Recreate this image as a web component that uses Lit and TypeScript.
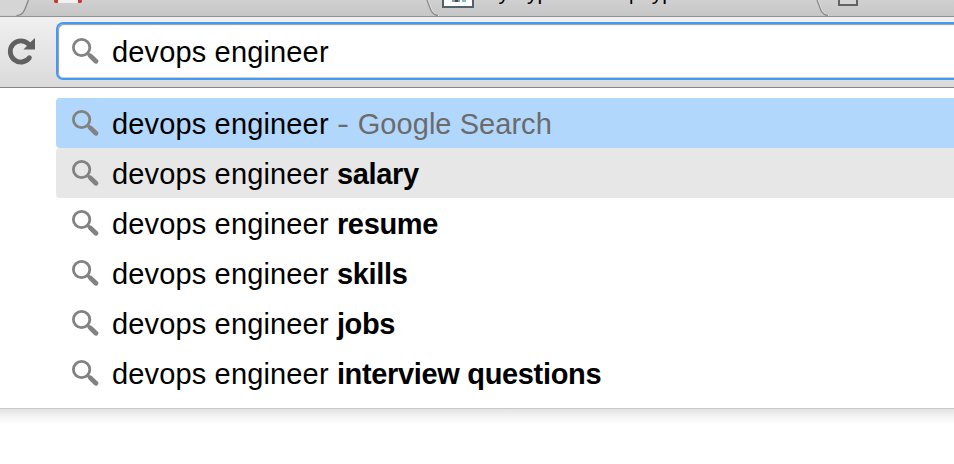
import { LitElement, html, css } from "lit";
import { customElement } from "lit/decorators.js";

const suggestions = [
  { tail: "Google Search", kind: "search" },
  { tail: "salary", kind: "hover" },
  { tail: "resume", kind: "" },
  { tail: "skills", kind: "" },
  { tail: "jobs", kind: "" },
  { tail: "interview questions", kind: "" },
];

const magnifier = html`<svg class="glass" width="28" height="28" viewBox="0 0 28 28">
  <circle cx="10.6" cy="10.5" r="8.2" fill="none" stroke="#828282" stroke-width="2.8" />
  <path d="M16.4 16.2L19 18.8" stroke="#828282" stroke-width="3.2" />
  <path d="M19.6 19.1L24.9 24.3" stroke="#828282" stroke-width="4.8" stroke-linecap="round" />
</svg>`;

const divider = html`<svg class="divider" width="15" height="16" viewBox="2 0 15 16">
  <path d="M3 0C6 7 7 15.5 14 15.5" fill="none" stroke="#e2e2e2" stroke-width="1.2" />
  <path d="M2 0C5 7 6 15.5 13 15.5" fill="none" stroke="#8b8b8b" stroke-width="1.3" />
</svg>`;

@customElement("app-root")
export class AppRoot extends LitElement {
  static styles = css`
    :host { display: block; width: 954px; height: 464px; overflow: hidden; background: #fff;
      font-family: "Liberation Sans", Arial, sans-serif; font-size: 29px; letter-spacing: 0.15px; color: #000; }
    * { box-sizing: border-box; }
    svg { display: block; flex: none; }
    .divider { overflow: visible; }
    .tabs { height: 17px; display: flex; align-items: flex-start; overflow: hidden; border-bottom: 1px solid #929292;
      background: linear-gradient(#d0d0d0, #c6c6c6); }
    .tab { display: flex; align-items: flex-start; flex: none; overflow: hidden; height: 16px; }
    .first { width: 397px; padding-left: 22px; }
    .second { width: 375px; }
    .third { padding-left: 6px; }
    .title { font-size: 21px; line-height: 24px; letter-spacing: 0.1px; margin-top: -19px; white-space: pre; }
    .first .title { color: #777; margin: -19px 0 0 14px; }
    .second .title { margin-left: 7px; }
    .third .title { color: #888; margin: -20px 0 0 16px; }
    .toolbar { height: 71px; display: flex; padding: 5px 0 0 6px; background: linear-gradient(#f0f0f0, #dadada);
      border-bottom: 1px solid #858585; }
    .reload { margin: 15px 20px 0 0; }
    .box { flex: 1; height: 58px; border: 2px solid #439af5; border-right: 0; border-radius: 7px 0 0 7px;
      background: #fff; box-shadow: inset 1px 1px 1px #999, inset 0 -1px 0 #ccc; display: flex; align-items: center;
      padding-left: 13px; }
    .glass { margin-right: 13px; }
    .text { padding-top: 2px; }
    .menu { height: 321px; padding: 10px 0 0 56px; border-bottom: 1px solid #c9c9c9; }
    .row { height: 50px; display: flex; align-items: center; padding-left: 15px; white-space: pre;
      border-radius: 4px 0 0 4px; }
    .search { background: #b2d7fd; }
    .hover { background: #e7e7e7; }
    .desc { color: #6b6b6b; letter-spacing: 0.05px; }
    .dash { display: inline-block; transform: scaleX(1.25); transform-origin: 0 50%; margin-right: 3px; }
    b { letter-spacing: -0.34px; }
    .shade { height: 16px; background: linear-gradient(#e2e2e2, #f5f5f5 50%, #fff); }
  `;

  render() {
    return html`
      <div class="tabs">
        <svg width="30" height="16" viewBox="0 0 30 16">
          <path d="M0 0H28C25 7 24 15.5 16 15.5H0Z" fill="#d5d5d5" />
          <path d="M28.5 0C25.5 7 24.5 15.5 16.5 15.5" fill="none" stroke="#8b8b8b" stroke-width="1.4" />
        </svg>
        <div class="tab first">
          <svg width="30" height="4" viewBox="0 0 30 4">
            <path d="M2 0H30V3H2Z" fill="#f1f1f1" />
            <path d="M2 0H6V3H3.5Q2 3 2 1.5ZM26 0H30V1.5Q30 3 28.5 3H26Z" fill="#c93c31" />
          </svg>
          <span class="title">Inbox - Research Mail</span>
        </div>
        ${divider}
        <div class="tab second">
          <svg width="32" height="8" viewBox="0 0 32 8">
            <path d="M1 -3H31V7H1Z" fill="#fff" />
            <path d="M0 0H2V6H30V0H32V8H0Z" fill="#53616e" />
            <path d="M10 0H13V2H10ZM16 0H18V2H16Z" fill="#8e949d" />
            <path d="M13 0H16V2H13Z" fill="#454b5e" />
            <path d="M20 0H24V2H20Z" fill="#70c4c1" />
          </svg>
          <span class="title">My hypothes.is | hypothes.is</span>
        </div>
        ${divider}
        <div class="tab third">
          <svg width="22" height="6" viewBox="0 0 22 6">
            <path d="M1 -4V5H19V-4" fill="#d5d5d5" stroke="#636363" stroke-width="2" />
          </svg>
          <span class="title">New Tab</span>
        </div>
      </div>
      <div class="toolbar">
        <svg class="reload" width="30" height="30" viewBox="0 0 30 30">
          <path d="M23.4 20.8A10.6 10.6 0 1 1 22.6 7.2" fill="none" stroke="#606060" stroke-width="4.8" stroke-linecap="round" />
          <path d="M29 1V12.6H17.4L21.4 8.4L23.5 6Z" fill="#606060" />
        </svg>
        <div class="box">${magnifier}<span class="text">devops engineer</span></div>
      </div>
      <div class="menu">
        ${suggestions.map(
          (s) => html`<div class="row ${s.kind}">${magnifier}<span class="text">devops engineer ${
            s.kind === "search"
              ? html`<span class="desc"><span class="dash">-</span> ${s.tail}</span>`
              : html`<b>${s.tail}</b>`
          }</span></div>`
        )}
      </div>
      <div class="shade"></div>
    `;
  }
}
